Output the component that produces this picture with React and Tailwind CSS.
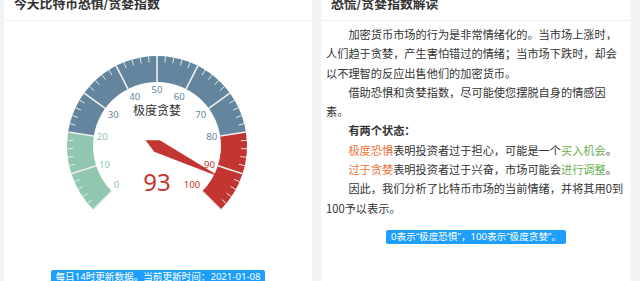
import React from 'react';

const CX = 153;
const CY = 125;
const R = 90;
const W = 26;

const GREEN = '#91c7ae';
const BLUE = '#63869e';
const RED = '#c23531';

function angle(v) {
  return ((225 - 270 * v) * Math.PI) / 180;
}

function polar(v, r) {
  const a = angle(v);
  return [CX + r * Math.cos(a), CY - r * Math.sin(a)];
}

function band(v0, v1) {
  const [x0, y0] = polar(v0, R);
  const [x1, y1] = polar(v1, R);
  const [x2, y2] = polar(v1, R - W);
  const [x3, y3] = polar(v0, R - W);
  const large = (v1 - v0) * 270 > 180 ? 1 : 0;
  return `M${x0} ${y0} A${R} ${R} 0 ${large} 1 ${x1} ${y1} L${x2} ${y2} A${R - W} ${R - W} 0 ${large} 0 ${x3} ${y3} Z`;
}

function colorAt(v) {
  if (v <= 0.2) return GREEN;
  if (v <= 0.8) return BLUE;
  return RED;
}

function Gauge({ value, name }) {
  const splits = [];
  const ticks = [];
  const labels = [];
  for (let i = 0; i <= 10; i++) {
    const v = i / 10;
    const [x1, y1] = polar(v, R);
    const [x2, y2] = polar(v, R - W);
    splits.push(<line key={i} x1={x1} y1={y1} x2={x2} y2={y2} stroke="#eee" strokeWidth="1.6" />);
    if (i < 10) {
      for (let j = 1; j < 5; j++) {
        const t = v + j / 50;
        const [a1, b1] = polar(t, R);
        const [a2, b2] = polar(t, R - 6);
        ticks.push(<line key={`${i}-${j}`} x1={a1} y1={b1} x2={a2} y2={b2} stroke="#eee" strokeWidth="0.9" />);
      }
    }
    const a = angle(v);
    const ux = Math.cos(a);
    const uy = -Math.sin(a);
    const [lx, ly] = polar(v, R - W - 3);
    const anchor = ux < -0.4 ? 'start' : ux > 0.4 ? 'end' : 'middle';
    const by = uy < -0.4 ? ly + 8 : uy > 0.4 ? ly - 1 : ly + 3.5;
    labels.push(
      <text key={i} x={lx} y={by} textAnchor={anchor} fontSize="9.6" fill={colorAt(v)}>
        {i * 10}
      </text>
    );
  }

  const p = value / 100;
  const a = -angle(p);
  const w = 6.4;
  const L = 72;
  const a2 = a - Math.PI / 2;
  const tail = [CX - Math.cos(a) * w * 2, CY - Math.sin(a) * w * 2];
  const pts = [
    tail,
    [CX + Math.cos(a2) * w, CY + Math.sin(a2) * w],
    [CX + Math.cos(a) * L, CY + Math.sin(a) * L],
    [CX - Math.cos(a2) * w, CY - Math.sin(a2) * w],
  ];

  return (
    <svg width="308" height="249" className="block" style={{ fontFamily: '"Noto Sans", "Noto Sans CJK SC", sans-serif' }}>
      <path d={band(0, 0.2)} fill={GREEN} />
      <path d={band(0.2, 0.8)} fill={BLUE} />
      <path d={band(0.8, 1)} fill={RED} />
      {ticks}
      {splits}
      {labels}
      <text x={CX} y={CY - 36 + 5} textAnchor="middle" fontSize="12" fill="#333" fontFamily='"Noto Sans CJK SC", sans-serif'>
        {name}
      </text>
      <polygon points={pts.map(q => q.join(',')).join(' ')} fill={RED} />
      <text x={CX} y={CY + 36 + 8.5} textAnchor="middle" fontSize="24" fill={RED}>
        {value}
      </text>
    </svg>
  );
}

function CardHeader({ children }) {
  return (
    <div className="h-[21px] border-b border-[#f3f3f3] px-[10px] overflow-hidden">
      <div className="mt-[-14px] leading-[34px] text-[12.8px] font-bold text-[#333]">{children}</div>
    </div>
  );
}

function Badge({ children }) {
  return (
    <div className="flex justify-center">
      <span
        className="block bg-[#1e9fff] text-white text-[9.6px] leading-[14.4px] h-[14.4px] px-[5px] rounded-[2px]"
        style={{ fontFamily: '"Noto Sans", "Noto Sans CJK SC", sans-serif' }}
      >
        {children}
      </span>
    </div>
  );
}

export default function App() {
  return (
    <div
      className="h-[281px] w-[640px] overflow-hidden bg-[#f2f2f2] flex gap-[9px] pl-[4px]"
      style={{ fontFamily: '"Noto Sans CJK SC", "Noto Sans", sans-serif' }}
    >
      <div className="w-[308px] bg-white">
        <CardHeader>今天比特币恐惧/贪婪指数</CardHeader>
        <Gauge value={93} name="极度贪婪" />
        <Badge>每日14时更新数据。当前更新时间：2021-01-08</Badge>
      </div>

      <div className="w-[310px] bg-white">
        <CardHeader>恐慌/贪婪指数解读</CardHeader>
        <div className="px-[5px] pt-[4px] text-[11.2px] leading-[19.3px] text-[#333]">
          <p className="indent-[2em]">
            加密货币市场的行为是非常情绪化的。当市场上涨时，人们趋于贪婪，产生害怕错过的情绪；当市场下跌时，却会以不理智的反应出售他们的加密货币。
          </p>
          <p className="indent-[2em]">借助恐惧和贪婪指数，尽可能使您摆脱自身的情感因素。</p>
          <p className="indent-[2em] font-bold">有两个状态：</p>
          <p className="indent-[2em]">
            <span className="text-[#f0703a]">极度恐惧</span>表明投资者过于担心，可能是一个
            <span className="text-[#6aaf4f]">买入机会</span>。
          </p>
          <p className="indent-[2em]">
            <span className="text-[#f0703a]">过于贪婪</span>表明投资者过于兴奋，市场可能会
            <span className="text-[#6aaf4f]">进行调整</span>。
          </p>
          <p className="indent-[2em]">因此，我们分析了比特币市场的当前情绪，并将其用0到100予以表示。</p>
          <div className="mt-[12px]">
            <Badge>0表示“极度恐惧”，100表示“极度贪婪”。</Badge>
          </div>
        </div>
      </div>
    </div>
  );
}
